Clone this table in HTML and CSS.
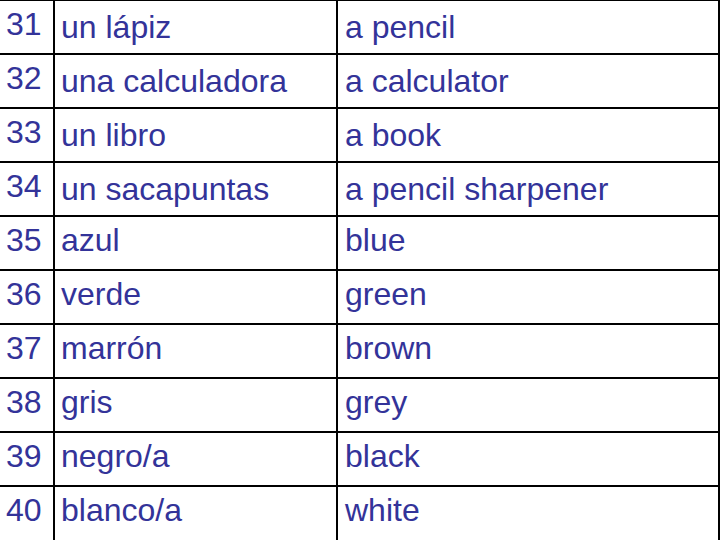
FILE: index.html
```html
<!DOCTYPE html>
<html>
<head>
<meta charset="utf-8">
<link rel="stylesheet" href="styles.css">
</head>
<body>
<table class="vocab">
<tr class="raised"><td class="num">31</td><td class="es">un lápiz</td><td class="en">a pencil</td></tr>
<tr class="raised"><td class="num">32</td><td class="es">una calculadora</td><td class="en">a calculator</td></tr>
<tr class="raised"><td class="num">33</td><td class="es">un libro</td><td class="en">a book</td></tr>
<tr class="raised"><td class="num">34</td><td class="es">un sacapuntas</td><td class="en">a pencil sharpener</td></tr>
<tr><td class="num">35</td><td class="es">azul</td><td class="en">blue</td></tr>
<tr><td class="num">36</td><td class="es">verde</td><td class="en">green</td></tr>
<tr><td class="num">37</td><td class="es">marrón</td><td class="en">brown</td></tr>
<tr><td class="num">38</td><td class="es">gris</td><td class="en">grey</td></tr>
<tr><td class="num">39</td><td class="es">negro/a</td><td class="en">black</td></tr>
<tr class="last"><td class="num">40</td><td class="es">blanco/a</td><td class="en">white</td></tr>
</table>
</body>
</html>
```
FILE: styles.css
```css
html, body {
  margin: 0;
  padding: 0;
  background: #ffffff;
}
body {
  width: 720px;
  height: 540px;
  overflow: hidden;
}
.vocab {
  border-collapse: separate;
  border-spacing: 0;
  border-top: 1px solid #000;
  width: 720px;
  table-layout: fixed;
  font-family: "Liberation Sans", Arial, sans-serif;
  font-size: 32px;
  color: #333399;
}
.vocab td {
  padding: 5px 0 0 0;
  line-height: 36px;
  vertical-align: top;
  box-sizing: border-box;
  border-right: 2px solid #000;
  border-bottom: 2px solid #000;
  white-space: nowrap;
  height: 54px;
}
.vocab tr.last td {
  border-bottom: none;
}
.vocab td.num {
  width: 55px;
  padding-left: 6px;
}
.vocab td.es {
  width: 283px;
  padding-left: 6px;
}
.vocab td.en {
  padding-left: 7px;
}
.vocab tr.raised td.es,
.vocab tr.raised td.en {
  padding-top: 8px;
}
```
